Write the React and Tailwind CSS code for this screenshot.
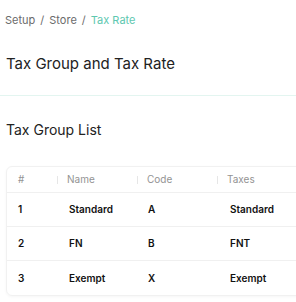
export default function App() {
  const rows = [
    ["1", "Standard", "A", "Standard"],
    ["2", "FN", "B", "FNT"],
    ["3", "Exempt", "X", "Exempt"],
  ];
  return (
    <div className="w-[296px] h-[302px] overflow-hidden bg-white" style={{ fontFamily: "Inter, 'Noto Sans', sans-serif" }}>
      <div className="flex items-center gap-[5px] pl-[5px] pt-[13px] h-[28px] text-[11px] text-[#6b6b6b]">
        <span>Setup</span>
        <span>/</span>
        <span>Store</span>
        <span>/</span>
        <span className="text-[#5ec8b0]">Tax Rate</span>
      </div>
      <div className="pl-[6px] pt-[25px] h-[67px] text-[15px] text-[#222]">Tax Group and Tax Rate</div>
      <div className="h-px bg-[#e3f5f0]" />
      <div className="pl-[6px] pt-[23px] h-[70px] text-[14px] text-[#222]">Tax Group List</div>
      <div className="ml-[6px] w-[320px] rounded-[6px] border border-[#f1f1f1] shadow-[0_1px_3px_rgba(0,0,0,0.04)]">
        <div className="flex h-[26px] items-center text-[10px] text-[#939393] border-b border-[#f0f0f0]">
          <div className="w-[50px] pl-[11px]">#</div>
          <div className="w-[80px] flex items-center"><span className="w-px h-[8px] bg-[#e6e6e6] mr-[9px]" />Name</div>
          <div className="w-[80px] flex items-center"><span className="w-px h-[8px] bg-[#e6e6e6] mr-[9px]" />Code</div>
          <div className="w-[80px] flex items-center"><span className="w-px h-[8px] bg-[#e6e6e6] mr-[9px]" />Taxes</div>
        </div>
        {rows.map((r, i) => (
          <div key={i} className={"flex h-[34px] items-center text-[10px] font-semibold text-[#111] " + (i < 2 ? "border-b border-[#f0f0f0]" : "")}>
            <div className="w-[50px] pl-[11px]">{r[0]}</div>
            <div className="w-[80px] pl-[12px]">{r[1]}</div>
            <div className="w-[80px] pl-[11px]">{r[2]}</div>
            <div className="w-[80px] pl-[13px]">{r[3]}</div>
          </div>
        ))}
      </div>
    </div>
  );
}
